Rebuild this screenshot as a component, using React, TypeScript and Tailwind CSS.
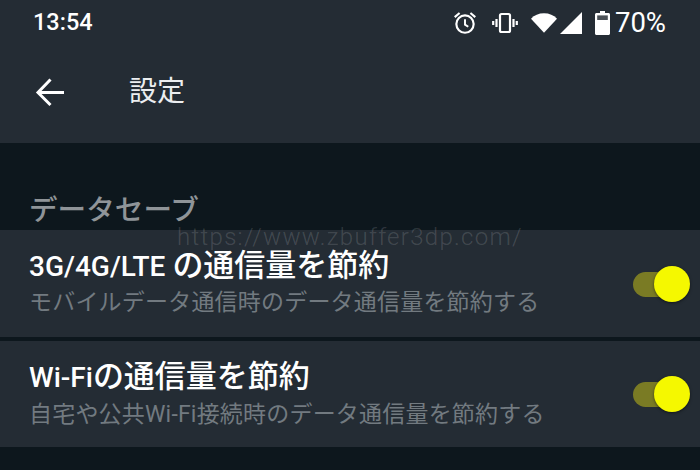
const jp = { fontFamily: '"Roboto", "Noto Sans CJK JP", sans-serif' };

function Toggle() {
  return (
    <div className="relative w-[57px] h-[36px] shrink-0">
      <div className="absolute left-0 top-[6px] w-[50px] h-[25px] rounded-full bg-[#7a7b24]" />
      <div className="absolute right-0 top-0 w-[36px] h-[36px] rounded-full bg-[#f5f800] shadow-[0_1px_3px_rgba(0,0,0,0.5)]" />
    </div>
  );
}

function Row({ latin, title, sub, h, textBox, subGap }: { latin: string; title: string; sub: string; h: string; textBox: string; subGap: string }) {
  return (
    <div className={`flex items-center justify-between bg-[#242c34] pl-[29px] pr-[10px] ${h}`}>
      <div className={`flex flex-col ${textBox}`}>
        <div className="text-[31px] leading-[38px] font-medium text-white">
          <span className="text-[28px]">{latin}</span>
          {title}
        </div>
        <div className={`text-[23px] leading-[30px] text-[#727a80] tracking-[0.2px] ${subGap}`}>{sub}</div>
      </div>
      <Toggle />
    </div>
  );
}

export default function App() {
  return (
    <div className="relative w-[700px] h-[470px] overflow-hidden bg-[#0d171d]" style={jp}>
      <div className="h-[143px] bg-[#242c34] flex flex-col">
        <div className="h-[45px] flex items-center justify-between pl-[33px] pr-[34px] text-white">
          <span className="text-[23.5px] font-medium leading-none">13:54</span>
          <div className="flex items-center">
            <svg width="26" height="26" viewBox="0 0 24 24" fill="none" stroke="white" strokeWidth="2" className="mr-[14px]">
              <circle cx="12" cy="13" r="8" />
              <path d="M12 8.5V13.5L15 15.5" strokeWidth="1.8" />
              <path d="M2.5 6.5L7 2.8M21.5 6.5L17 2.8" />
            </svg>
            <svg width="26" height="24" viewBox="0 0 26 24" fill="none" stroke="white" strokeWidth="2.2" className="mr-[13px]">
              <rect x="8" y="3" width="10" height="18" rx="1.5" />
              <path d="M4.5 8v8M21.5 8v8M1.2 10v4M24.8 10v4" />
            </svg>
            <svg width="26" height="22" viewBox="0 0 27 22" className="mr-[3px]">
              <path d="M0 6.5C3.5 3 8 1 13.5 1S23.5 3 27 6.5L13.5 21Z" fill="white" />
            </svg>
            <svg width="22" height="22" viewBox="0 0 22 22" className="mr-[13px]">
              <path d="M22 0V22H0Z" fill="white" />
            </svg>
            <svg width="15" height="24" viewBox="0 0 15 24" className="mr-[5px]">
              <path d="M5 0H10V2H13.5C14.3 2 15 2.7 15 3.5V22.5C15 23.3 14.3 24 13.5 24H1.5C.7 24 0 23.3 0 22.5V3.5C0 2.7.7 2 1.5 2H5Z" fill="white" />
              <rect x="2.2" y="4.4" width="10.6" height="4.6" fill="#4b5157" />
            </svg>
            <span className="text-[27.5px] font-normal leading-none">70%</span>
          </div>
        </div>
        <div className="flex-1 flex items-center pb-[4px]">
          <svg width="30" height="30" viewBox="0 0 30 30" fill="none" stroke="white" strokeWidth="3" className="ml-[35px]">
            <path d="M29 15.5H3M15.5 2.5L3 15.5L15.5 28" />
          </svg>
          <span className="ml-[64px] text-[28px] leading-none text-[#eceef0]">設定</span>
        </div>
      </div>
      <div className="h-[87px] flex items-end pl-[29px]">
        <span className="text-[28.6px] font-medium leading-[40px] text-[#8f9498]">データセーブ</span>
      </div>
      <Row latin="3G/4G/LTE " title="の通信量を節約" sub="モバイルデータ通信時のデータ通信量を節約する" h="h-[107px]" textBox="pb-[3px]" subGap="mt-[2px]" />
      <div className="h-[4px]" />
      <Row latin="Wi-Fi" title="の通信量を節約" sub="自宅や公共Wi-Fi接続時のデータ通信量を節約する" h="h-[106px]" textBox="pb-0" subGap="mt-[3px]" />
      <div className="absolute left-[177px] top-[221px] text-[24px] leading-[32px] text-white/15 font-light tracking-[1.3px]">https://www.zbuffer3dp.com/</div>
    </div>
  );
}
